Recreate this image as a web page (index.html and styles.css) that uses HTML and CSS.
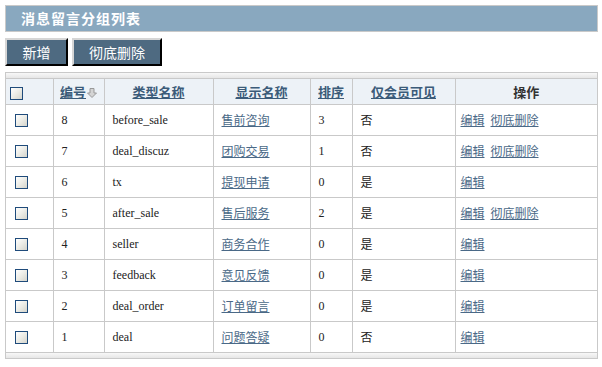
FILE: index.html
```html
<!DOCTYPE html>
<html lang="zh-CN">
<head>
    <meta charset="UTF-8">
    <title>消息留言分组列表</title>
    <link rel="stylesheet" href="styles.css">
</head>
<body>
    <div class="main">
        <div class="main-title">消息留言分组列表</div>

        <div class="toolbar">
            <button class="btn btn-add">新增</button>
            <button class="btn btn-del">彻底删除</button>
        </div>

        <div class="list-box">
            <div class="list-strip"></div>
            <table class="data-table">
                <colgroup>
                    <col class="w-check">
                    <col class="w-id">
                    <col class="w-type">
                    <col class="w-name">
                    <col class="w-sort">
                    <col class="w-member">
                    <col class="w-ops">
                </colgroup>
                <thead>
                    <tr>
                        <th class="col-check"><span class="check"></span></th>
                        <th><a href="#">编号</a><svg class="sort-icon" width="10" height="10" viewBox="0 0 10 10"><path d="M3 0.5h4v4.5h2.5L5 9.5 0.5 5H3z" fill="#d4d4d4" stroke="#999" stroke-width="1"/></svg></th>
                        <th><a href="#">类型名称</a></th>
                        <th><a href="#">显示名称</a></th>
                        <th><a href="#">排序</a></th>
                        <th><a href="#">仅会员可见</a></th>
                        <th class="plain">操作</th>
                    </tr>
                </thead>
                <tbody>
                    <tr>
                        <td class="col-check"><span class="check"></span></td>
                        <td>8</td><td>before_sale</td><td><a href="#">售前咨询</a></td><td>3</td><td>否</td>
                        <td class="ops"><a href="#">编辑</a> <a href="#">彻底删除</a></td>
                    </tr>
                    <tr>
                        <td class="col-check"><span class="check"></span></td>
                        <td>7</td><td>deal_discuz</td><td><a href="#">团购交易</a></td><td>1</td><td>否</td>
                        <td class="ops"><a href="#">编辑</a> <a href="#">彻底删除</a></td>
                    </tr>
                    <tr>
                        <td class="col-check"><span class="check"></span></td>
                        <td>6</td><td>tx</td><td><a href="#">提现申请</a></td><td>0</td><td>是</td>
                        <td class="ops"><a href="#">编辑</a></td>
                    </tr>
                    <tr>
                        <td class="col-check"><span class="check"></span></td>
                        <td>5</td><td>after_sale</td><td><a href="#">售后服务</a></td><td>2</td><td>是</td>
                        <td class="ops"><a href="#">编辑</a> <a href="#">彻底删除</a></td>
                    </tr>
                    <tr>
                        <td class="col-check"><span class="check"></span></td>
                        <td>4</td><td>seller</td><td><a href="#">商务合作</a></td><td>0</td><td>是</td>
                        <td class="ops"><a href="#">编辑</a></td>
                    </tr>
                    <tr>
                        <td class="col-check"><span class="check"></span></td>
                        <td>3</td><td>feedback</td><td><a href="#">意见反馈</a></td><td>0</td><td>是</td>
                        <td class="ops"><a href="#">编辑</a></td>
                    </tr>
                    <tr>
                        <td class="col-check"><span class="check"></span></td>
                        <td>2</td><td>deal_order</td><td><a href="#">订单留言</a></td><td>0</td><td>是</td>
                        <td class="ops"><a href="#">编辑</a></td>
                    </tr>
                    <tr>
                        <td class="col-check"><span class="check"></span></td>
                        <td>1</td><td>deal</td><td><a href="#">问题答疑</a></td><td>0</td><td>否</td>
                        <td class="ops"><a href="#">编辑</a></td>
                    </tr>
                </tbody>
            </table>
            <div class="list-strip list-strip-bottom"></div>
        </div>
    </div>
</body>
</html>
```

FILE: styles.css
```css
body {
    margin: 0;
    padding: 5px;
    background: #fff;
    color: #222;
    font-family: "Liberation Serif", "Noto Sans CJK SC", serif;
    font-size: 12px;
}

.main {
    width: 593px;
}

.main-title {
    height: 25px;
    line-height: 25px;
    padding-left: 15px;
    background: #89a8bf;
    border: 1px solid #c9c9c9;
    color: #fff;
    font-family: "Noto Sans CJK SC", sans-serif;
    font-size: 14px;
    font-weight: bold;
    letter-spacing: 1px;
}

.toolbar {
    display: flex;
    gap: 4px;
    margin: 6px 0;
}

.btn {
    height: 28px;
    padding: 0;
    background: #4e6a81;
    color: #fff;
    border: 2px solid;
    border-color: #d6d6d6 #000 #000 #d6d6d6;
    font-family: "Noto Sans CJK SC", sans-serif;
    font-size: 14px;
    cursor: pointer;
}

.btn-add {
    width: 63px;
}

.btn-del {
    width: 90px;
}

.list-box {
    border: 1px solid #c9c9c9;
}

.list-strip {
    height: 5px;
    background: linear-gradient(#f8f8f8, #e6e6e6);
    border-bottom: 1px solid #c9c9c9;
}

.list-strip-bottom {
    border-bottom: 0;
}

.data-table {
    width: 100%;
    border-collapse: collapse;
    table-layout: fixed;
}

.w-check { width: 47px; }
.w-id { width: 51px; }
.w-type { width: 109px; }
.w-name { width: 97px; }
.w-sort { width: 42px; }
.w-member { width: 103px; }
.w-ops { width: 142px; }

.data-table th,
.data-table td {
    padding: 0 0 0 8px;
    border-right: 1px solid #c9c9c9;
    border-bottom: 1px solid #c9c9c9;
    text-align: left;
    white-space: nowrap;
}

.data-table th:last-child,
.data-table td:last-child {
    border-right: 0;
}

.data-table th {
    height: 25px;
    padding: 0;
    background: #edf2f7;
    text-align: center;
    font-family: "Noto Sans CJK SC", sans-serif;
    font-size: 13px;
    font-weight: bold;
}

.data-table th a {
    color: #3b5b79;
}

.data-table th.plain {
    color: #333;
}

.data-table th.col-check {
    text-align: left;
    padding-left: 4px;
}

.data-table td {
    height: 30px;
}

.data-table td.col-check {
    padding-left: 9px;
}

.data-table td a {
    color: #4a6987;
    font-family: "Noto Sans CJK SC", sans-serif;
}

.data-table td.ops {
    padding-left: 5px;
}

.ops a + a {
    margin-left: 3px;
}

.check {
    display: inline-block;
    width: 11px;
    height: 11px;
    border: 1px solid #1f4b7b;
    background: linear-gradient(135deg, #fff 0%, #ecece6 50%, #d4d4cc 100%);
    vertical-align: middle;
}

.sort-icon {
    margin-left: 1px;
    vertical-align: -1px;
}
```
